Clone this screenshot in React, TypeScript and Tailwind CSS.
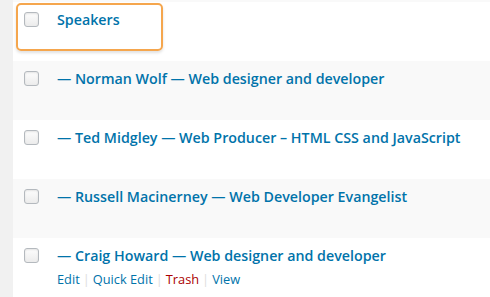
import React from "react";

const rows = [
  { title: "Speakers", bg: "bg-white" },
  { title: "— Norman Wolf — Web designer and developer", bg: "bg-[#f9f9f9]" },
  { title: "— Ted Midgley — Web Producer – HTML CSS and JavaScript", bg: "bg-white" },
  { title: "— Russell Macinerney — Web Developer Evangelist", bg: "bg-[#f9f9f9]" },
  { title: "— Craig Howard — Web designer and developer", bg: "bg-white", actions: true },
];

function Checkbox() {
  return (
    <div className="w-[15px] h-[15px] rounded-[3px] border border-[#b4b9be] bg-gradient-to-b from-[#fdfdfd] to-[#ececec] shadow-[inset_0_1px_2px_rgba(0,0,0,0.1)]" />
  );
}

export default function App() {
  return (
    <div
      className="relative w-[490px] h-[297px] overflow-hidden bg-[#f1f1f1] flex"
      style={{ fontFamily: '"Open Sans", "Noto Sans", sans-serif' }}
    >
      <div className="w-[13px] shrink-0" />
      <div className="flex-1 flex flex-col">
        <div className="h-[2px] bg-[#f9f9f9]" />
        {rows.map((r, i) => (
          <div key={i} className={`h-[59px] flex ${r.bg}`}>
            <div className="w-[44px] shrink-0 pt-[10px] pl-[11px]">
              <Checkbox />
            </div>
            <div className="pt-[8px] flex flex-col">
              <div className="text-[14.25px] leading-[19.5px] font-semibold text-[#0073aa] whitespace-nowrap">
                {r.title}
              </div>
              {r.actions && (
                <div className="pt-[4px] text-[12.8px] leading-[19px] text-[#0073aa] whitespace-nowrap flex items-center">
                  <span>Edit</span>
                  <span className="text-[#dddddd] px-[3px]">|</span>
                  <span>Quick Edit</span>
                  <span className="text-[#dddddd] px-[3px]">|</span>
                  <span className="text-[#a00]">Trash</span>
                  <span className="text-[#dddddd] px-[3px]">|</span>
                  <span>View</span>
                </div>
              )}
            </div>
          </div>
        ))}
      </div>
      <div className="absolute left-[16px] top-[3px] w-[147px] h-[48px] rounded-[5px] border-2 border-[#f5a64d] shadow-[0_2px_3px_rgba(0,0,0,0.12)]" />
    </div>
  );
}
